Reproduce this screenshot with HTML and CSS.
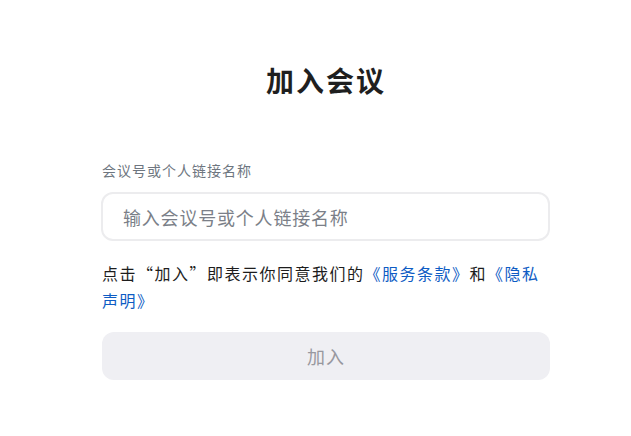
FILE: index.html
```html
<!DOCTYPE html>
<html lang="zh-CN">
<head>
<meta charset="utf-8">
<title>加入会议</title>
<link rel="stylesheet" href="styles.css">
</head>
<body>
<main class="join">
  <h1 class="join-title">加入会议</h1>
  <label class="field-label" for="meeting">会议号或个人链接名称</label>
  <input class="field-input" id="meeting" type="text" placeholder="输入会议号或个人链接名称">
  <p class="terms">点击“加入”即表示你同意我们的<a class="link" href="#">《服务条款》</a>和<a class="link" href="#">《隐私声明》</a></p>
  <button class="join-btn" type="button">加入</button>
</main>
</body>
</html>
```

FILE: styles.css
```css
* { box-sizing: border-box; }
html, body {
  margin: 0;
  padding: 0;
  background: #ffffff;
}
body {
  font-family: "Noto Sans CJK SC", "Noto Sans", sans-serif;
  color: #232333;
}
.join {
  display: flex;
  flex-direction: column;
  width: 448px;
  margin-left: 102px;
  padding-top: 60px;
}
.join-title {
  margin: 0;
  text-align: center;
  font-size: 28px;
  line-height: 40px;
  font-weight: 700;
  letter-spacing: 2px;
  color: #1f1f1f;
}
.field-label {
  margin-top: 60px;
  font-size: 14px;
  line-height: 20px;
  letter-spacing: 1px;
  color: #6e7680;
}
.field-input {
  margin-top: 12px;
  margin-left: -1px;
  width: 449px;
  height: 49px;
  border: 2px solid #ececee;
  border-radius: 12px;
  padding: 0 20px;
  font-family: inherit;
  font-size: 18px;
  letter-spacing: 0.8px;
  color: #232333;
  outline: none;
  background: #fff;
}
.field-input::placeholder {
  color: #7b7f88;
}
.terms {
  margin: 19px 0 0;
  font-size: 16px;
  line-height: 27px;
  letter-spacing: 1.5px;
  color: #1d1d1d;
}
.link {
  color: #0e5cc4;
  text-decoration: none;
}
.join-btn {
  margin-top: 18px;
  height: 48px;
  width: 448px;
  border: none;
  border-radius: 12px;
  background: #efeff3;
  font-family: inherit;
  font-size: 18px;
  letter-spacing: 1px;
  color: #98989f;
  cursor: default;
}
```
